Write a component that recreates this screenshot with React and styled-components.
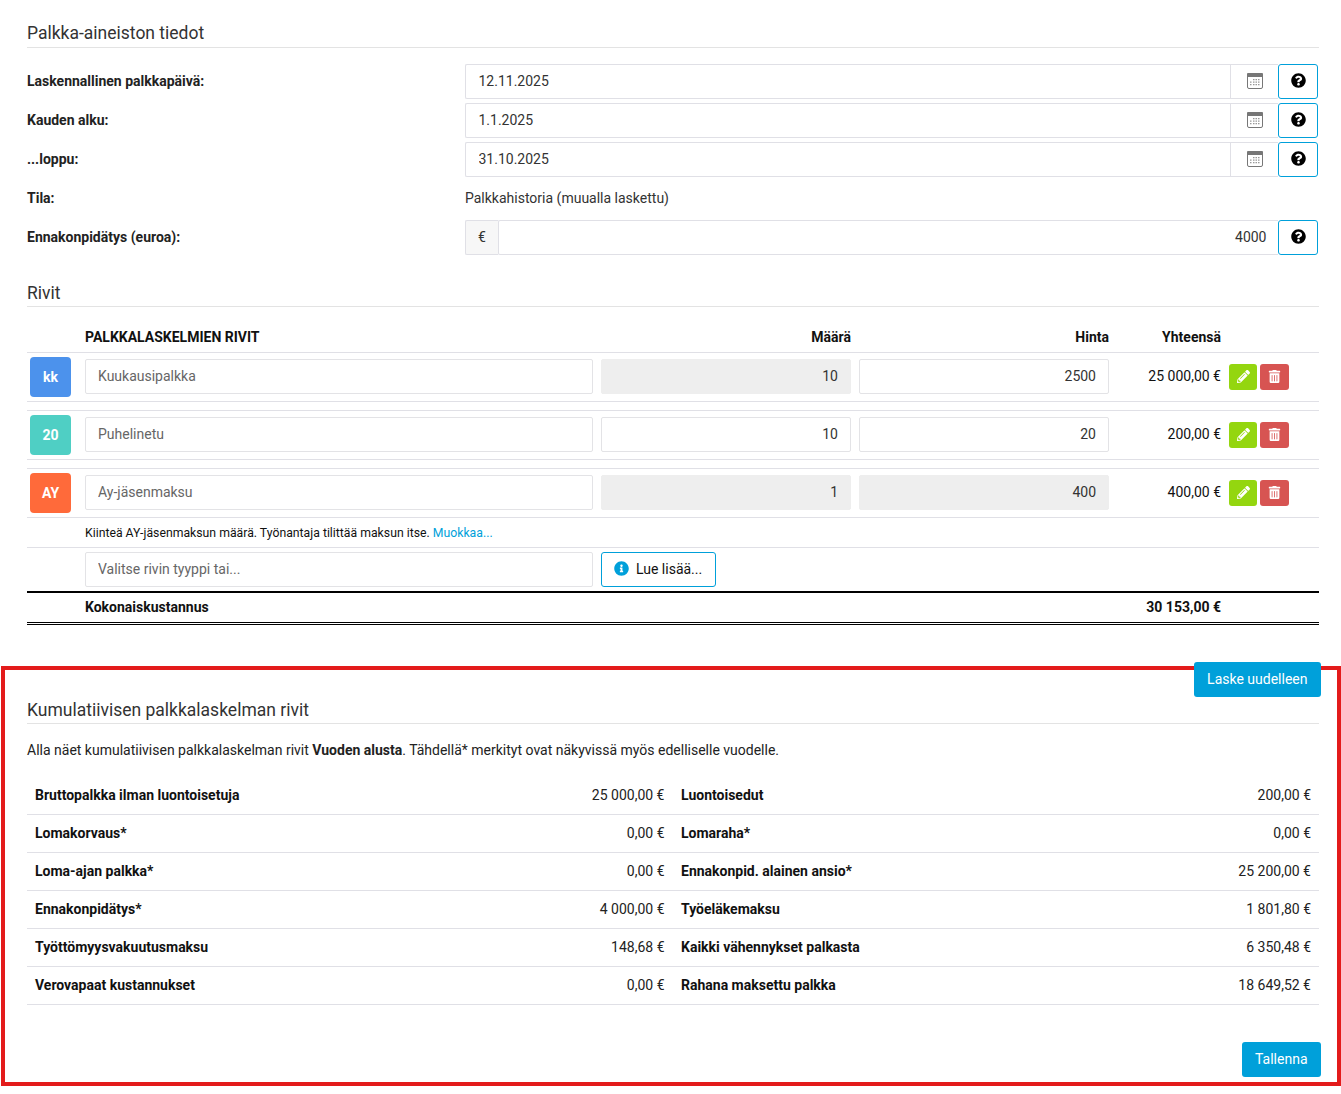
import React from "react";
import styled, { createGlobalStyle } from "styled-components";
import { FaQuestionCircle, FaPencilAlt, FaTrashAlt, FaInfoCircle } from "react-icons/fa";

const GlobalStyle = createGlobalStyle`
  html, body {
    margin: 0;
    background: #fff;
  }
  body {
    font-family: Roboto, "Liberation Sans", sans-serif;
    font-size: 14px;
    color: #222;
  }
  * {
    box-sizing: border-box;
  }
`;

const CalendarIcon = () => (
  <svg width="16" height="16" viewBox="0 0 16 16">
    <rect x="0.5" y="0.5" width="15" height="15" rx="1.5" fill="#fff" stroke="#777" />
    <rect x="0" y="0" width="16" height="4" rx="1" fill="#777" />
    <path
      d="M6 6h1.5v1.3H6zM8.5 6H10v1.3H8.5zM11 6h1.5v1.3H11zM3 8.5h1.5v1.3H3zM6 8.5h1.5v1.3H6zM8.5 8.5H10v1.3H8.5zM11 8.5h1.5v1.3H11zM3 11h1.5v1.3H3zM6 11h1.5v1.3H6zM8.5 11H10v1.3H8.5zM11 11h1.5v1.3H11z"
      fill="#999"
    />
  </svg>
);

const formRows = [
  { label: "Laskennallinen palkkapäivä:", value: "12.11.2025" },
  { label: "Kauden alku:", value: "1.1.2025" },
  { label: "...loppu:", value: "31.10.2025" },
];

const payRows = [
  { badge: "kk", color: "#4c92ec", name: "Kuukausipalkka", qty: "10", qtyOff: true, price: "2500", priceOff: false, total: "25 000,00 €" },
  { badge: "20", color: "#4fcfc4", name: "Puhelinetu", qty: "10", qtyOff: false, price: "20", priceOff: false, total: "200,00 €" },
  { badge: "AY", color: "#ff6a3a", name: "Ay-jäsenmaksu", qty: "1", qtyOff: true, price: "400", priceOff: true, total: "400,00 €" },
];

const summary = [
  ["Bruttopalkka ilman luontoisetuja", "25 000,00 €", "Luontoisedut", "200,00 €"],
  ["Lomakorvaus*", "0,00 €", "Lomaraha*", "0,00 €"],
  ["Loma-ajan palkka*", "0,00 €", "Ennakonpid. alainen ansio*", "25 200,00 €"],
  ["Ennakonpidätys*", "4 000,00 €", "Työeläkemaksu", "1 801,80 €"],
  ["Työttömyysvakuutusmaksu", "148,68 €", "Kaikki vähennykset palkasta", "6 350,48 €"],
  ["Verovapaat kustannukset", "0,00 €", "Rahana maksettu palkka", "18 649,52 €"],
];

const App = () => {
  return (
    <Page>
      <GlobalStyle />
      <Title>Palkka-aineiston tiedot</Title>
      <Form>
        {formRows.map((row) => (
          <FormRow key={row.label}>
            <Label>{row.label}</Label>
            <InputGroup>
              <GroupInput readOnly value={row.value} />
              <Addon>
                <CalendarIcon />
              </Addon>
              <HelpButton>
                <FaQuestionCircle size={15} color="#000" />
              </HelpButton>
            </InputGroup>
          </FormRow>
        ))}
        <FormRow>
          <Label>Tila:</Label>
          <StaticValue>Palkkahistoria (muualla laskettu)</StaticValue>
        </FormRow>
        <FormRow>
          <Label>Ennakonpidätys (euroa):</Label>
          <InputGroup>
            <EuroAddon>€</EuroAddon>
            <GroupInput $right readOnly value="4000" />
            <HelpButton>
              <FaQuestionCircle size={15} color="#000" />
            </HelpButton>
          </InputGroup>
        </FormRow>
      </Form>

      <Title $top={25}>Rivit</Title>
      <HeadRow>
        <span />
        <HeadCell>PALKKALASKELMIEN RIVIT</HeadCell>
        <HeadCell $right>Määrä</HeadCell>
        <HeadCell $right>Hinta</HeadCell>
        <HeadCell $right>Yhteensä</HeadCell>
        <span />
      </HeadRow>
      {payRows.map((row) => (
        <PayRow key={row.badge}>
          <Badge $color={row.color}>{row.badge}</Badge>
          <RowInput readOnly placeholder={row.name} />
          <RowInput $right $off={row.qtyOff} readOnly value={row.qty} />
          <RowInput $right $off={row.priceOff} readOnly value={row.price} />
          <TotalCell>{row.total}</TotalCell>
          <Actions>
            <ActionButton $color="#94d60f">
              <FaPencilAlt size={13} />
            </ActionButton>
            <ActionButton $color="#d75452" $wide>
              <FaTrashAlt size={13} />
            </ActionButton>
          </Actions>
        </PayRow>
      ))}
      <NoteRow>
        Kiinteä AY-jäsenmaksun määrä. Työnantaja tilittää maksun itse. <NoteLink>Muokkaa...</NoteLink>
      </NoteRow>
      <AddRow>
        <span />
        <TextInput readOnly placeholder="Valitse rivin tyyppi tai..." />
        <ReadMore>
          <FaInfoCircle size={15} color="#00a0da" />
          Lue lisää...
        </ReadMore>
      </AddRow>
      <GrandRow>
        <span />
        <strong>Kokonaiskustannus</strong>
        <GrandTotal>30 153,00 €</GrandTotal>
      </GrandRow>

      <Cumulative>
        <RedFrame />
        <ButtonBar>
          <PrimaryButton>Laske uudelleen</PrimaryButton>
        </ButtonBar>
        <CumulativeTitle>Kumulatiivisen palkkalaskelman rivit</CumulativeTitle>
        <Intro>
          Alla näet kumulatiivisen palkkalaskelman rivit <strong>Vuoden alusta</strong>. Tähdellä* merkityt ovat näkyvissä myös edelliselle vuodelle.
        </Intro>
        <Summary>
          {summary.map((row) => (
            <SummaryRow key={row[0]}>
              <SummaryPair>
                <SummaryLabel>{row[0]}</SummaryLabel>
                <span>{row[1]}</span>
              </SummaryPair>
              <SummaryPair>
                <SummaryLabel>{row[2]}</SummaryLabel>
                <span>{row[3]}</span>
              </SummaryPair>
            </SummaryRow>
          ))}
        </Summary>
        <SaveBar>
          <PrimaryButton>Tallenna</PrimaryButton>
        </SaveBar>
      </Cumulative>
    </Page>
  );
};

export default App;

const Page = styled.div`
  width: 1341px;
  min-height: 1094px;
  padding: 20px 22px 17px 27px;
`;

const Title = styled.h3`
  margin: ${(p) => p.$top || 0}px 0 0;
  height: ${(p) => (p.$top ? 27 : 28)}px;
  font-size: 17.5px;
  font-weight: 400;
  line-height: 26px;
  color: #333;
  border-bottom: 1px solid #e3e3e3;
`;

const Form = styled.div`
  display: flex;
  flex-direction: column;
  gap: 4px;
  margin-top: 16px;
`;

const FormRow = styled.div`
  display: grid;
  grid-template-columns: 438px 1fr;
  align-items: center;
  min-height: 35px;
  margin-right: 1px;
`;

const Label = styled.label`
  padding-bottom: 2px;
  font-weight: 700;
  color: #222;
`;

const StaticValue = styled.div`
  padding-bottom: 2px;
  color: #333;
`;

const InputGroup = styled.div`
  display: flex;
  height: 35px;
`;

const GroupInput = styled.input`
  flex: 1;
  min-width: 0;
  height: 35px;
  padding: 0 11.5px 2px 12.5px;
  border: 1px solid #e0e0e6;
  border-right: 0;
  border-radius: 2px 0 0 2px;
  font: 14px Roboto, sans-serif;
  color: #333;
  text-align: ${(p) => (p.$right ? "right" : "left")};
  outline: none;
`;

const Addon = styled.div`
  display: flex;
  align-items: center;
  justify-content: center;
  width: 48px;
  padding-bottom: 2px;
  border: 1px solid #e0e0e6;
  border-right: 0;
`;

const EuroAddon = styled.div`
  display: flex;
  align-items: center;
  justify-content: center;
  width: 33px;
  padding-bottom: 2px;
  background: #f7f7f7;
  border: 1px solid #e0e0e6;
  border-right: 0;
  border-radius: 2px 0 0 2px;
  color: #333;
`;

const HelpButton = styled.button`
  display: flex;
  align-items: flex-start;
  justify-content: center;
  width: 40px;
  height: 35px;
  padding: 8px 0 0;
  background: #fff;
  border: 1px solid #00a0da;
  border-radius: 3px;
`;

const rowColumns = "50px 508px 250px 250px 104px 90px";

const HeadRow = styled.div`
  display: grid;
  grid-template-columns: ${rowColumns};
  column-gap: 8px;
  align-items: center;
  height: 46px;
  padding-top: 15px;
  border-bottom: 1px solid #e0e0e6;
`;

const HeadCell = styled.div`
  font-weight: 700;
  color: #111;
  text-align: ${(p) => (p.$right ? "right" : "left")};
`;

const PayRow = styled.div`
  display: grid;
  grid-template-columns: ${rowColumns};
  column-gap: 8px;
  align-items: center;
  height: 49px;
  border-bottom: 1px solid #e0e0e6;
  & + & {
    margin-top: 8px;
    border-top: 1px solid #e0e0e6;
    height: 50px;
  }
`;

const Badge = styled.div`
  display: flex;
  align-items: center;
  justify-content: center;
  width: 41px;
  height: 40px;
  margin-left: 3px;
  padding-bottom: 1px;
  border-radius: 4px;
  background: ${(p) => p.$color};
  color: #fff;
  font-weight: 700;
`;

const TextInput = styled.input`
  width: 100%;
  height: 35px;
  padding: 0 12px 2px;
  background: ${(p) => (p.$off ? "#eee" : "#fff")};
  border: 1px solid ${(p) => (p.$off ? "#eee" : "#e3e3e6")};
  border-radius: 2px;
  font: 14px Roboto, sans-serif;
  color: #333;
  text-align: ${(p) => (p.$right ? "right" : "left")};
  outline: none;
  &::placeholder {
    color: #666;
  }
`;

const RowInput = styled(TextInput)`
  margin-bottom: 2px;
  padding-bottom: 0;
`;

const TotalCell = styled.div`
  padding-bottom: 2px;
  text-align: right;
  color: #111;
`;

const Actions = styled.div`
  display: flex;
  gap: 3px;
`;

const ActionButton = styled.button`
  display: flex;
  align-items: center;
  justify-content: center;
  width: ${(p) => (p.$wide ? 29 : 28)}px;
  height: 26px;
  padding: 0 0 2px;
  background: ${(p) => p.$color};
  border: 0;
  border-radius: 3px;
  color: #fff;
`;

const NoteRow = styled.div`
  display: flex;
  align-items: center;
  gap: 3px;
  height: 30px;
  padding-left: 58px;
  border-bottom: 1px solid #e0e0e6;
  font-size: 12.25px;
  color: #111;
`;

const NoteLink = styled.a`
  color: #00a0da;
`;

const AddRow = styled.div`
  display: grid;
  grid-template-columns: 50px 508px auto;
  justify-content: start;
  column-gap: 8px;
  align-items: flex-start;
  height: 43px;
  padding-top: 4px;
`;

const ReadMore = styled.button`
  display: flex;
  align-items: center;
  gap: 7px;
  height: 35px;
  padding: 0 13px 2px 12px;
  background: #fff;
  border: 1px solid #00a0da;
  border-radius: 3px;
  font: 14px Roboto, sans-serif;
  color: #111;
`;

const GrandRow = styled.div`
  display: grid;
  grid-template-columns: 50px 1024px 104px;
  column-gap: 8px;
  align-items: center;
  height: 34px;
  padding-bottom: 1px;
  border-top: 2px solid #000;
  border-bottom: 3px double #000;
  color: #111;
`;

const GrandTotal = styled.strong`
  text-align: right;
`;

const Cumulative = styled.section`
  position: relative;
  margin-top: 37px;
`;

const RedFrame = styled.div`
  position: absolute;
  left: -26px;
  right: -22px;
  top: 4px;
  height: 420px;
  border: 4px solid #e31b1b;
  pointer-events: none;
`;

const ButtonBar = styled.div`
  position: relative;
  display: flex;
  justify-content: flex-end;
  margin-right: -2px;
  height: 35px;
`;

const SaveBar = styled(ButtonBar)`
  margin-top: 37px;
`;

const PrimaryButton = styled.button`
  height: 35px;
  padding: 0 13.5px 2px 13px;
  background: #00a0da;
  border: 0;
  border-radius: 3px;
  font: 14px Roboto, sans-serif;
  color: #fff;
`;

const CumulativeTitle = styled(Title)`
  height: 27px;
`;

const Intro = styled.p`
  margin: 16px 0 0;
  line-height: 20px;
  color: #222;
`;

const Summary = styled.div`
  display: flex;
  flex-direction: column;
  margin-top: 17px;
`;

const SummaryRow = styled.div`
  display: grid;
  grid-template-columns: 629.5px 1fr;
  column-gap: 16.5px;
  align-items: center;
  height: 38px;
  padding: 0 8px 2px;
  border-bottom: 1px solid #e0e0e6;
`;

const SummaryPair = styled.div`
  display: flex;
  justify-content: space-between;
  color: #222;
`;

const SummaryLabel = styled.div`
  font-weight: 700;
  color: #111;
`;
